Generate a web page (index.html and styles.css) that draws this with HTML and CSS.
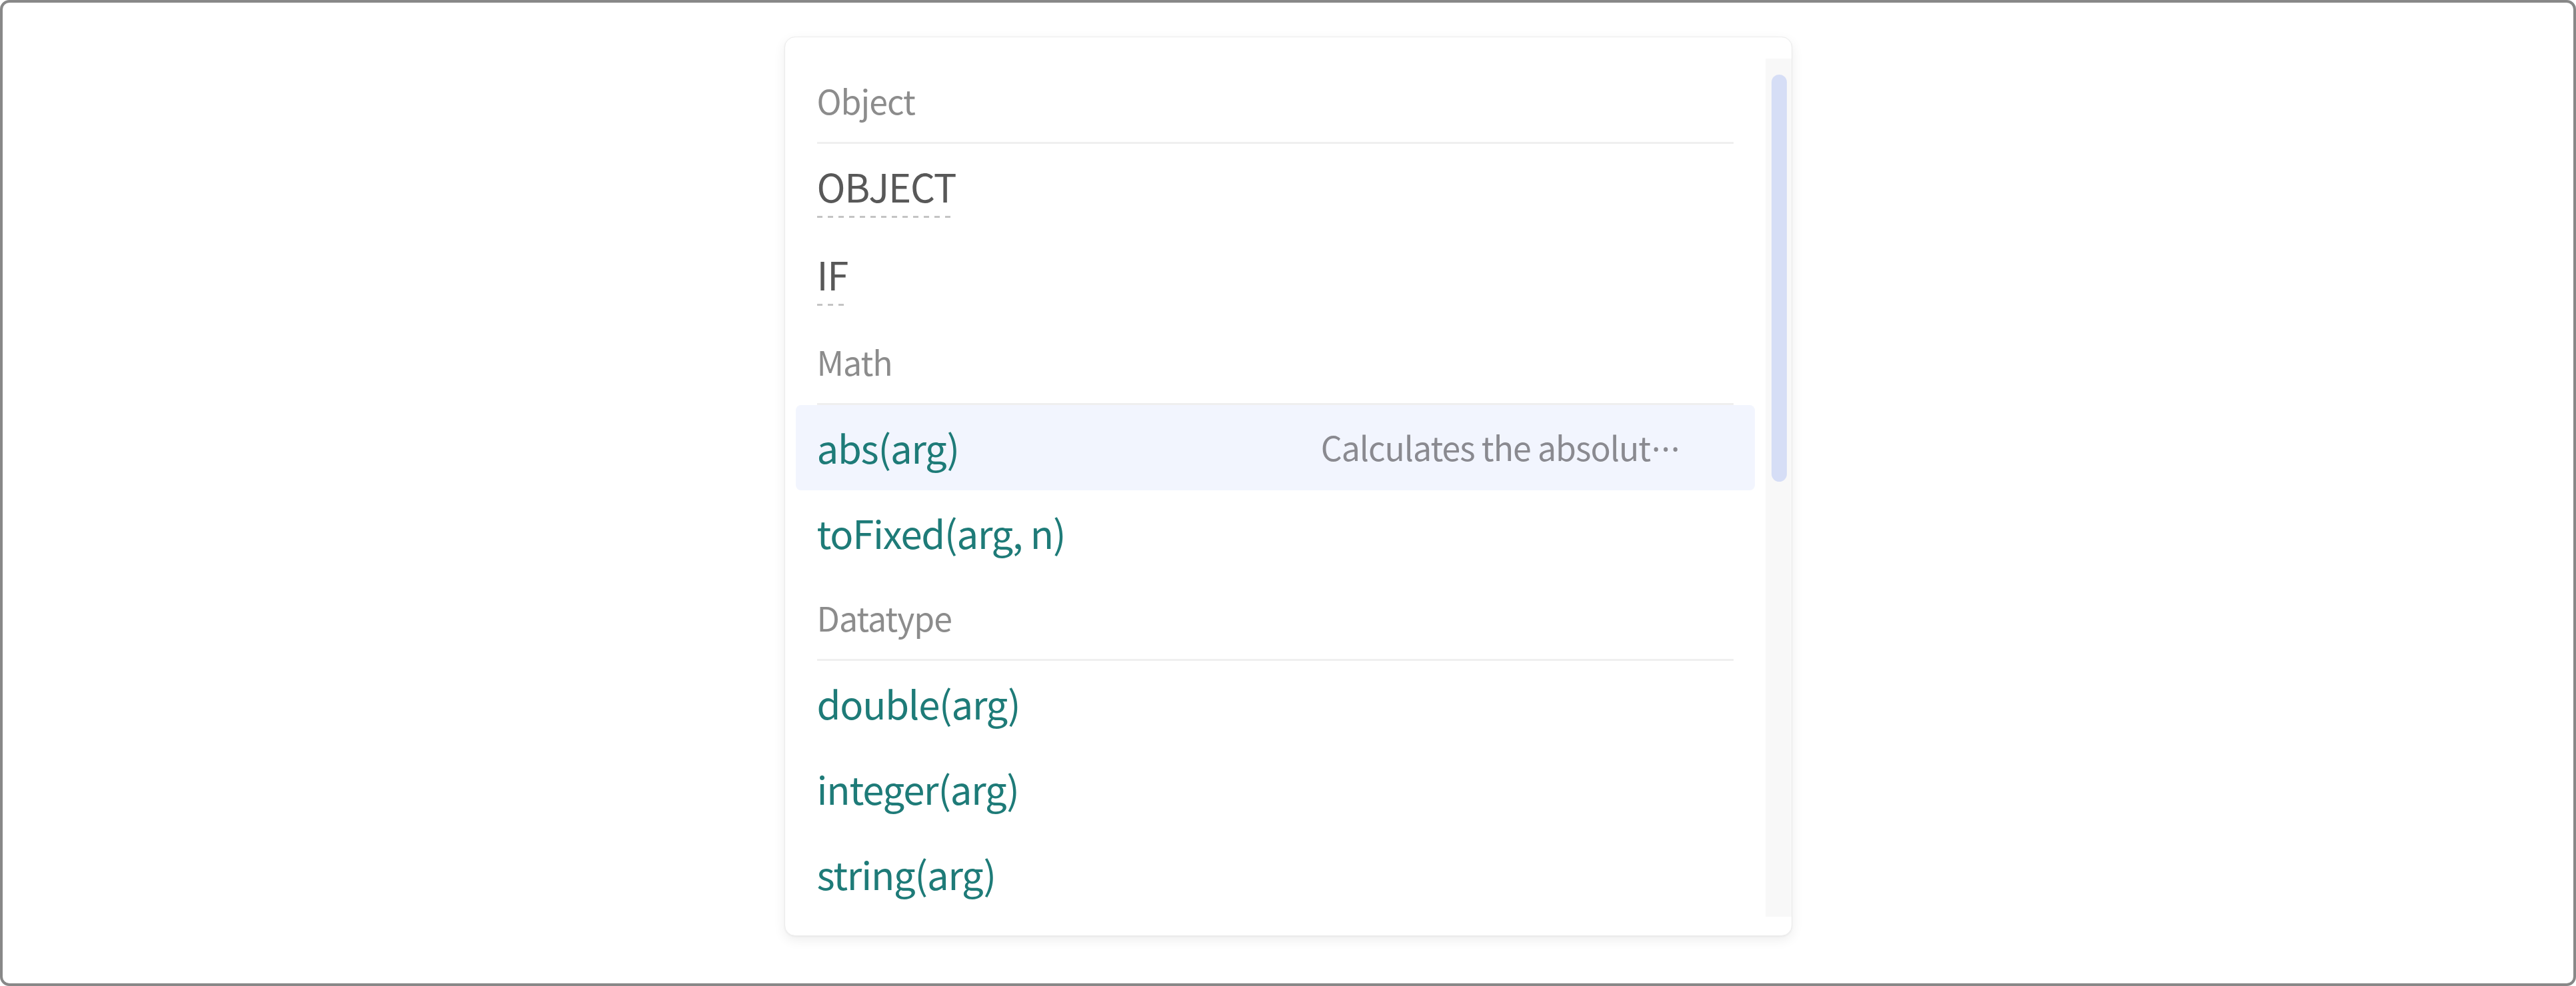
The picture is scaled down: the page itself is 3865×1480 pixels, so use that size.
FILE: index.html
```html
<!DOCTYPE html>
<html lang="en">
<head>
<meta charset="utf-8">
<title>Autocomplete</title>
<link rel="stylesheet" href="styles.css">
</head>
<body>
<div class="frame">
  <div class="panel">
    <div class="list">
      <div class="group-title">Object</div>
      <div class="item item-plain"><span class="term">OBJECT</span></div>
      <div class="item item-plain"><span class="term">IF</span></div>
      <div class="group-title">Math</div>
      <div class="item is-active"><span class="name">abs(arg)</span><span class="desc">Calculates the absolut<span class="dots">···</span></span></div>
      <div class="item"><span class="name">toFixed(arg, n)</span></div>
      <div class="group-title">Datatype</div>
      <div class="item"><span class="name">double(arg)</span></div>
      <div class="item"><span class="name">integer(arg)</span></div>
      <div class="item"><span class="name">string(arg)</span></div>
    </div>
    <div class="scrollbar"><div class="thumb"></div></div>
  </div>
</div>
</body>
</html>
```

FILE: styles.css
```css
* { box-sizing: border-box; }
html, body { margin: 0; padding: 0; }
body {
  width: 3865px;
  height: 1480px;
  background: #ffffff;
  font-family: "Noto Sans CJK SC", "Noto Sans", sans-serif;
}
.frame {
  width: 3865px;
  height: 1480px;
  border: 4px solid #888888;
  border-radius: 14px;
  display: flex;
  justify-content: center;
  align-items: flex-start;
  padding-top: 51px;
  background: #ffffff;
}
.panel {
  width: 1512px;
  height: 1350px;
  background: #ffffff;
  border: 1px solid #ececec;
  border-radius: 16px;
  box-shadow: 0 6px 18px rgba(0, 0, 0, 0.07), 0 1px 3px rgba(0, 0, 0, 0.05);
  display: flex;
  padding: 32px 0 28px 16px;
}
.list {
  flex: 1;
  min-width: 0;
  margin-right: 16px;
  overflow: hidden;
}
.scrollbar {
  width: 39px;
  background: #f8f8f8;
  padding: 24px 7px 0 9px;
}
.thumb {
  height: 611px;
  border-radius: 12px;
  background: #d6def6;
}
.group-title {
  height: 128px;
  margin: 0 32px;
  border-bottom: 3px solid #efefef;
  display: flex;
  align-items: center;
  padding-bottom: 1px;
  font-size: 50px;
  letter-spacing: -1px;
  color: #8c8c8c;
}
.item {
  height: 128px;
  display: flex;
  align-items: center;
  padding: 0 32px 3px;
  border-radius: 8px;
}
.item-plain {
  height: 132px;
  padding-bottom: 0;
}
.term {
  font-size: 58px;
  letter-spacing: -1.2px;
  color: #585858;
  padding-bottom: 6px;
  background-image: repeating-linear-gradient(to right, #c4c4c4 0 8px, transparent 8px 16px);
  background-size: 100% 3px;
  background-position: left bottom;
  background-repeat: no-repeat;
}
.name {
  flex: 1;
  min-width: 0;
  font-size: 58px;
  letter-spacing: -1.2px;
  color: #1e7b78;
  white-space: nowrap;
}
.desc {
  flex: 0 0 45%;
  font-size: 50px;
  letter-spacing: -1px;
  color: #8a8a90;
  white-space: nowrap;
  overflow: hidden;
}
.dots {
  font-family: "Noto Sans", "Open Sans", sans-serif;
  letter-spacing: 1px;
  padding-left: 2px;
}
.is-active {
  background: #f2f5fe;
}
```
